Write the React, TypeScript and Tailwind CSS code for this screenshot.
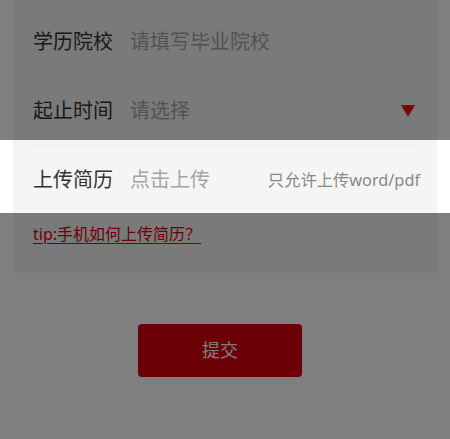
const rows = [
  { label: "学历院校", placeholder: "请填写毕业院校" },
  { label: "起止时间", placeholder: "请选择", select: true },
  { label: "上传简历", placeholder: "点击上传", hint: "只允许上传word/pdf" },
]

function Caret() {
  return (
    <svg width="14" height="12" viewBox="0 0 14 12" className="block">
      <path d="M0 0 H14 L7 12 Z" fill="#f21414" />
    </svg>
  )
}

export default function App() {
  return (
    <div
      className="relative h-[439px] w-full overflow-hidden bg-white"
      style={{ fontFamily: '"Noto Sans", "Noto Sans CJK SC", sans-serif' }}
    >
      <div className="mx-[13px] bg-[#f5f5f5] px-[20px] pt-[7px] pb-[27px]">
        {rows.map((row) => (
          <div key={row.label} className="flex h-[69px] items-center border-t border-[#ececec]">
            <span className="w-[97px] text-[20px] text-[#333]">{row.label}</span>
            <span className="flex-1 text-[20px] text-[#a5a5a5]">{row.placeholder}</span>
            {row.select && (
              <span className="pr-[2px]">
                <Caret />
              </span>
            )}
            {row.hint && <span className="-mr-[3px] text-[16.3px] text-[#888]">{row.hint}</span>}
          </div>
        ))}
        <a className="mt-[8px] block text-[16px] leading-[24px] text-[#d6000c] underline underline-offset-[3px]">
          tip:手机如何上传简历？
        </a>
      </div>

      <button className="mt-[51px] ml-[138px] h-[53px] w-[164px] rounded-[4px] bg-[#d6000c] text-[18px] text-white">
        提交
      </button>

      {/* guide mask, leaves the upload row lit */}
      <div className="absolute top-0 right-0 left-0 h-[140px] bg-black/50" />
      <div className="absolute top-[213px] right-0 bottom-0 left-0 bg-black/50" />
    </div>
  )
}
